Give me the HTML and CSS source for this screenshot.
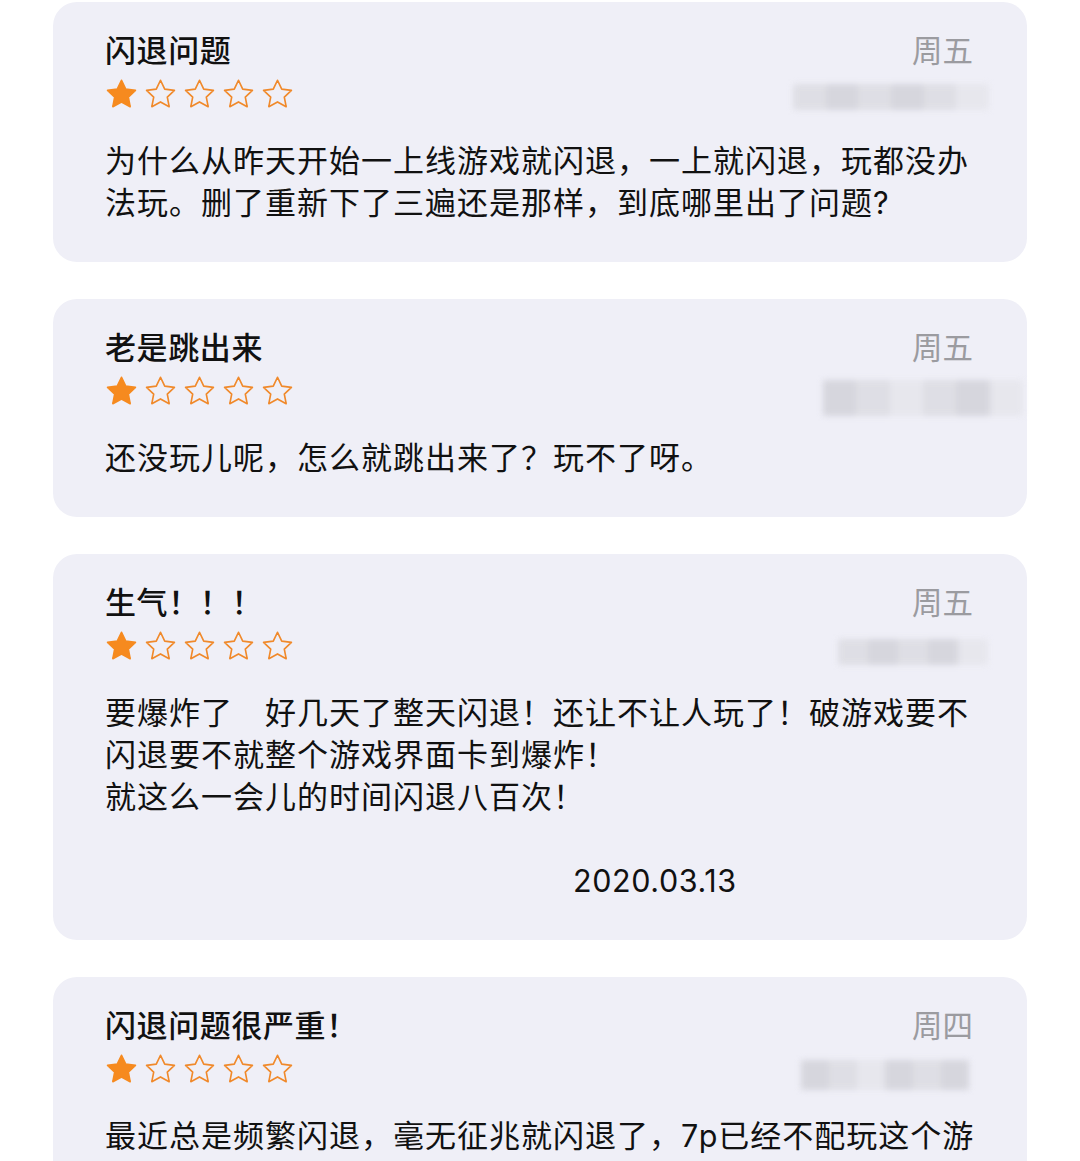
FILE: index.html
```html
<!DOCTYPE html>
<html lang="zh-CN">
<head>
<meta charset="utf-8">
<link rel="stylesheet" href="styles.css">
</head>
<body>
<svg width="0" height="0" class="defs">
  <defs>
    <polygon id="star" points="16,2.2 20.1,10.8 29.5,12 22.6,18.5 24.4,27.8 16,23.2 7.6,27.8 9.4,18.5 2.5,12 11.9,10.8"/>
  </defs>
</svg>
<main class="list">

  <section class="card">
    <div class="head">
      <div class="left">
        <h2 class="title">闪退问题</h2>
        <div class="stars">
          <svg class="star full" viewBox="0 0 32 32"><use href="#star"/></svg>
          <svg class="star" viewBox="0 0 32 32"><use href="#star"/></svg>
          <svg class="star" viewBox="0 0 32 32"><use href="#star"/></svg>
          <svg class="star" viewBox="0 0 32 32"><use href="#star"/></svg>
          <svg class="star" viewBox="0 0 32 32"><use href="#star"/></svg>
        </div>
      </div>
      <div class="right">
        <div class="day">周五</div>
        <div class="blur blur-1"><i></i><i class="d"></i><i></i><i class="d"></i><i></i><i class="l"></i></div>
      </div>
    </div>
    <p class="body">为什么从昨天开始一上线游戏就闪退，一上就闪退，玩都没办<br>法玩。删了重新下了三遍还是那样，到底哪里出了问题<span class="lat">?</span></p>
  </section>

  <section class="card">
    <div class="head">
      <div class="left">
        <h2 class="title">老是跳出来</h2>
        <div class="stars">
          <svg class="star full" viewBox="0 0 32 32"><use href="#star"/></svg>
          <svg class="star" viewBox="0 0 32 32"><use href="#star"/></svg>
          <svg class="star" viewBox="0 0 32 32"><use href="#star"/></svg>
          <svg class="star" viewBox="0 0 32 32"><use href="#star"/></svg>
          <svg class="star" viewBox="0 0 32 32"><use href="#star"/></svg>
        </div>
      </div>
      <div class="right">
        <div class="day">周五</div>
        <div class="blur blur-2"><i class="d"></i><i></i><i class="l"></i><i></i><i class="d"></i><i class="l"></i></div>
      </div>
    </div>
    <p class="body">还没玩儿呢，怎么就跳出来了？玩不了呀。</p>
  </section>

  <section class="card">
    <div class="head">
      <div class="left">
        <h2 class="title">生气！！！</h2>
        <div class="stars">
          <svg class="star full" viewBox="0 0 32 32"><use href="#star"/></svg>
          <svg class="star" viewBox="0 0 32 32"><use href="#star"/></svg>
          <svg class="star" viewBox="0 0 32 32"><use href="#star"/></svg>
          <svg class="star" viewBox="0 0 32 32"><use href="#star"/></svg>
          <svg class="star" viewBox="0 0 32 32"><use href="#star"/></svg>
        </div>
      </div>
      <div class="right">
        <div class="day">周五</div>
        <div class="blur blur-3"><i></i><i class="d"></i><i></i><i class="d"></i><i class="l"></i></div>
      </div>
    </div>
    <p class="body">要爆炸了　好几天了整天闪退！还让不让人玩了！破游戏要不<br>闪退要不就整个游戏界面卡到爆炸！<br>就这么一会儿的时间闪退八百次！<br>&nbsp;</p>
    <p class="body sign"><span class="lat">2020.03.13</span></p>
  </section>

  <section class="card">
    <div class="head">
      <div class="left">
        <h2 class="title">闪退问题很严重！</h2>
        <div class="stars">
          <svg class="star full" viewBox="0 0 32 32"><use href="#star"/></svg>
          <svg class="star" viewBox="0 0 32 32"><use href="#star"/></svg>
          <svg class="star" viewBox="0 0 32 32"><use href="#star"/></svg>
          <svg class="star" viewBox="0 0 32 32"><use href="#star"/></svg>
          <svg class="star" viewBox="0 0 32 32"><use href="#star"/></svg>
        </div>
      </div>
      <div class="right">
        <div class="day">周四</div>
        <div class="blur blur-4"><i class="d"></i><i></i><i class="l"></i><i class="d"></i><i></i><i class="d"></i></div>
      </div>
    </div>
    <p class="body">最近总是频繁闪退，毫无征兆就闪退了，<span class="lat">7p</span>已经不配玩这个游</p>
  </section>

</main>
</body>
</html>
```

FILE: styles.css
```css
html, body {
  margin: 0;
  padding: 0;
  background: #ffffff;
}

body {
  font-family: "Noto Sans CJK SC", "Noto Sans", sans-serif;
  color: #111111;
  overflow: hidden;
  height: 1161px;
}

.defs {
  position: absolute;
  width: 0;
  height: 0;
}

.list {
  display: flex;
  flex-direction: column;
  gap: 37px;
  padding: 2px 53px 0 53px;
}

.card {
  background: #efeff7;
  border-radius: 24px;
  padding: 27px 54px 40px 52px;
}

.head {
  display: flex;
  justify-content: space-between;
  align-items: flex-start;
  height: 82px;
}

.left {
  display: flex;
  flex-direction: column;
}

.title {
  margin: 0;
  font-size: 31px;
  line-height: 40px;
  font-weight: 500;
  letter-spacing: 0.6px;
  color: #111111;
}

.stars {
  display: flex;
  gap: 6px;
  margin-top: 8px;
  height: 34px;
  align-items: center;
}

.star {
  width: 33px;
  height: 33px;
  display: block;
}

.star use {
  fill: none;
  stroke: #f0892a;
  stroke-width: 1.6;
  stroke-linejoin: round;
}

.star.full use {
  fill: #f68a1f;
  stroke: #f68a1f;
}

.right {
  display: flex;
  flex-direction: column;
  align-items: flex-end;
}

.day {
  font-size: 30.5px;
  line-height: 40px;
  color: #9b9ba0;
}

.blur {
  display: flex;
  filter: blur(3px);
  opacity: 0.85;
  margin-top: 15px;
  height: 26px;
}

.blur i {
  display: block;
  flex: 1;
  background: #dcdce2;
}

.blur i.d {
  background: #d2d2d9;
}

.blur i.l {
  background: #e6e6ec;
}

.blur-1 {
  width: 196px;
  margin-right: -16px;
}

.blur-2 {
  width: 200px;
  height: 36px;
  margin-top: 14px;
  margin-right: -50px;
}

.blur-3 {
  width: 150px;
  margin-top: 18px;
  margin-right: -15px;
}

.blur-4 {
  width: 168px;
  height: 30px;
  margin-top: 16px;
  margin-right: 4px;
}

.body {
  margin: 27px 0 0 0;
  font-family: "Noto Sans CJK SC", sans-serif;
  font-size: 31px;
  line-height: 42px;
  letter-spacing: 1px;
  white-space: nowrap;
  color: #111111;
}

.lat {
  font-family: "Inter", "Noto Sans", sans-serif;
  font-size: 30.5px;
  letter-spacing: 0.6px;
  line-height: 1;
}

.sign {
  margin-top: 0;
  padding-left: 468px;
}
```
